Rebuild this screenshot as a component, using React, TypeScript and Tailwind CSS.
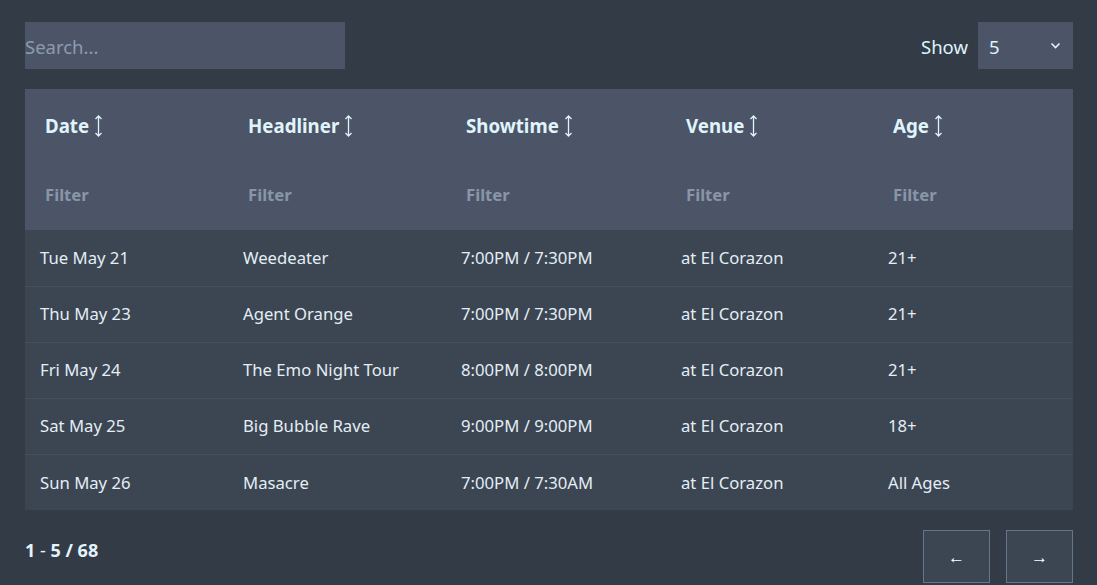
import { useState } from 'react';

const rows = [
    { date: 'Tue May 21', headliner: 'Weedeater', showtime: '7:00PM / 7:30PM', venue: 'at El Corazon', age: '21+' },
    { date: 'Thu May 23', headliner: 'Agent Orange', showtime: '7:00PM / 7:30PM', venue: 'at El Corazon', age: '21+' },
    { date: 'Fri May 24', headliner: 'The Emo Night Tour', showtime: '8:00PM / 8:00PM', venue: 'at El Corazon', age: '21+' },
    { date: 'Sat May 25', headliner: 'Big Bubble Rave', showtime: '9:00PM / 9:00PM', venue: 'at El Corazon', age: '18+' },
    { date: 'Sun May 26', headliner: 'Masacre', showtime: '7:00PM / 7:30AM', venue: 'at El Corazon', age: 'All Ages' },
];

const columns = [
    { label: 'Date', width: 'w-[203px]' },
    { label: 'Headliner', width: 'w-[218px]' },
    { label: 'Showtime', width: 'w-[220px]' },
    { label: 'Venue', width: 'w-[207px]' },
    { label: 'Age', width: 'w-[200px]' },
];

function SortIcon() {
    return (
        <svg width="9" height="24" viewBox="0 0 9 24" fill="none" stroke="#e0f4fb" strokeWidth="1.3" className="ml-[5px] inline-block align-middle">
            <path d="M4.5 2v20M1.5 5l3-3 3 3M1.5 19l3 3 3-3" />
        </svg>
    );
}

export default function App() {
    const [search, setSearch] = useState('');

    return (
        <div className="min-h-[585px] bg-[#333b47] pl-[25px] pr-[24px] pt-[22px] text-[#e8eef5]" style={{ fontFamily: '"Noto Sans", "Open Sans", sans-serif' }}>
            <div className="flex items-center justify-between">
                <input
                    value={search}
                    onChange={(e) => setSearch(e.target.value)}
                    placeholder="Search..."
                    className="h-[47px] w-[320px] bg-[#4b5567] pt-[2px] text-[18.5px] text-white outline-none placeholder:text-[#8d9bb0]"
                />
                <div className="flex items-center gap-[10px]">
                    <span className="pt-[3px] text-[18.5px] text-[#dff3fb]">Show</span>
                    <div className="flex h-[47px] w-[95px] items-center justify-between bg-[#4b5567] pl-[11px] pr-[12px]">
                        <span className="pt-[2px] text-[18.5px] text-[#dff3fb]">5</span>
                        <svg width="11" height="7" viewBox="0 0 11 7" fill="none" stroke="#dff3fb" strokeWidth="1.6">
                            <path d="M1.5 1.5l4 4 4-4" />
                        </svg>
                    </div>
                </div>
            </div>

            <table className="mt-[20px] w-[1048px] table-fixed border-collapse">
                <thead className="bg-[#4b5567]">
                    <tr>
                        {columns.map((c) => (
                            <th key={c.label} className={`${c.width} h-[72px] pl-[20px] text-left text-[18.7px] font-bold text-[#e0f4fb]`}>
                                <span className="align-middle">{c.label}</span>
                                <SortIcon />
                            </th>
                        ))}
                    </tr>
                    <tr>
                        {columns.map((c) => (
                            <th key={c.label} className="h-[69px] pl-[20px] pb-[1px] text-left text-[16.7px] font-bold text-[#8a95a7]">
                                Filter
                            </th>
                        ))}
                    </tr>
                </thead>
                <tbody>
                    {rows.map((r, i) => (
                        <tr key={r.date} className={`h-[56px] bg-[#3c4552] text-[16.7px] text-[#e3eef5] ${i < rows.length - 1 ? 'border-b border-[#46505d]' : ''}`}>
                            <td className="pl-[15px]">{r.date}</td>
                            <td className="pl-[15px]">{r.headliner}</td>
                            <td className="pl-[15px]">{r.showtime}</td>
                            <td className="pl-[15px]">{r.venue}</td>
                            <td className="pl-[15px]">{r.age}</td>
                        </tr>
                    ))}
                </tbody>
            </table>

            <div className="mt-[20px] flex items-start justify-between">
                <div className="pt-[7px] text-[18px] font-bold text-[#e3f3fb]">
                    1 <span className="font-normal">-</span> 5 / 68
                </div>
                <div className="flex gap-[16px]">
                    <button className="flex h-[53px] w-[67px] items-center justify-center border border-[#66768a] bg-[#3c4552] text-[17px] text-white">←</button>
                    <button className="flex h-[53px] w-[67px] items-center justify-center border border-[#66768a] bg-[#3c4552] text-[17px] text-white">→</button>
                </div>
            </div>
        </div>
    );
}
